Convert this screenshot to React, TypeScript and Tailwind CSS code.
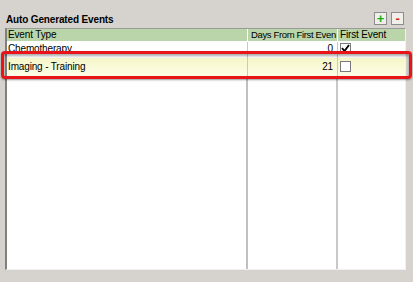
import React from "react";

function CheckBox({ checked }: { checked?: boolean }) {
  return (
    <div className="w-[11px] h-[11px] border border-[#7a7a7a] bg-white flex items-center justify-center">
      {checked && (
        <svg width="9" height="9" viewBox="0 0 9 9">
          <path d="M1 4 L3.5 7 L8 1" stroke="#000" strokeWidth="1.8" fill="none" />
        </svg>
      )}
    </div>
  );
}

export default function App() {
  return (
    <div
      className="w-[413px] h-[282px] bg-[#d6d3ce] relative overflow-hidden text-[10px] tracking-[-0.15px] text-black"
      style={{ fontFamily: '"Liberation Sans", Arial, sans-serif' }}
    >
      {/* Title + add/remove buttons */}
      <div className="flex items-end h-[26px] pl-[6px] pr-[9px]">
        <div className="font-bold text-[10px] leading-[12px] flex-1">Auto Generated Events</div>
        <div className="flex gap-[4px] mb-[1px]">
          <div className="w-[13px] h-[13px] border border-[#8c8c8c] bg-[#f0efe9] flex items-center justify-center text-[#10b010] font-bold text-[13px] leading-none">
            +
          </div>
          <div className="w-[13px] h-[13px] border border-[#8c8c8c] bg-[#f0efe9] flex items-center justify-center text-[#e02020] font-bold text-[13px] leading-none">
            -
          </div>
        </div>
      </div>

      {/* Table */}
      <div className="ml-[5px] mt-[2px] w-[401px] h-[242px] bg-white border-l-2 border-t border-l-[#808080] border-t-[#9a9a9a] border-r border-b border-r-[#f0f0f0] border-b-[#f0f0f0] flex flex-col relative">
        {/* header */}
        <div className="flex h-[13px] bg-[#b9d5a9] border-b border-white leading-[12px] whitespace-nowrap">
          <div className="w-[241px] pl-[1px] border-r border-white">Event Type</div>
          <div className="w-[90px] pl-[3px] border-r border-white overflow-hidden text-[9.5px] tracking-[-0.35px]">
            Days From First Even
          </div>
          <div className="flex-1 pl-[2px] overflow-hidden">First Event</div>
        </div>
        {/* row 1 */}
        <div className="flex h-[16px] leading-[14px] whitespace-nowrap">
          <div className="w-[241px] pl-[1px] border-r border-[#c8c8c8]">Chemotherapy</div>
          <div className="w-[90px] pr-[4px] text-right border-r border-[#c8c8c8]">0</div>
          <div className="flex-1 pl-[2px] pt-[1px]">
            <CheckBox checked />
          </div>
        </div>
        {/* row 2 */}
        <div className="flex h-[18px] leading-[18px] whitespace-nowrap bg-gradient-to-b from-[#f6f6c8] to-[#fdfde8]">
          <div className="w-[241px] pl-[1px] border-r border-[#c8c8c8]">Imaging - Training</div>
          <div className="w-[90px] pr-[4px] text-right border-r border-[#c8c8c8]">21</div>
          <div className="flex-1 pl-[2px] pt-[3px]">
            <CheckBox />
          </div>
        </div>
        {/* empty body with column lines */}
        <div className="flex flex-1">
          <div className="w-[241px] border-r-2 border-[#c0c0c0]" />
          <div className="w-[90px] border-r-2 border-[#c8c8c8]" />
          <div className="flex-1" />
        </div>
      </div>

      {/* Red highlight overlay */}
      <div className="absolute left-[1px] top-[51px] w-[411px] h-[28px] border-[3px] border-[#e8141a] rounded-[4px] shadow-[inset_0_2px_3px_rgba(0,0,0,0.35),0_1px_2px_rgba(0,0,0,0.4)]" />
    </div>
  );
}
